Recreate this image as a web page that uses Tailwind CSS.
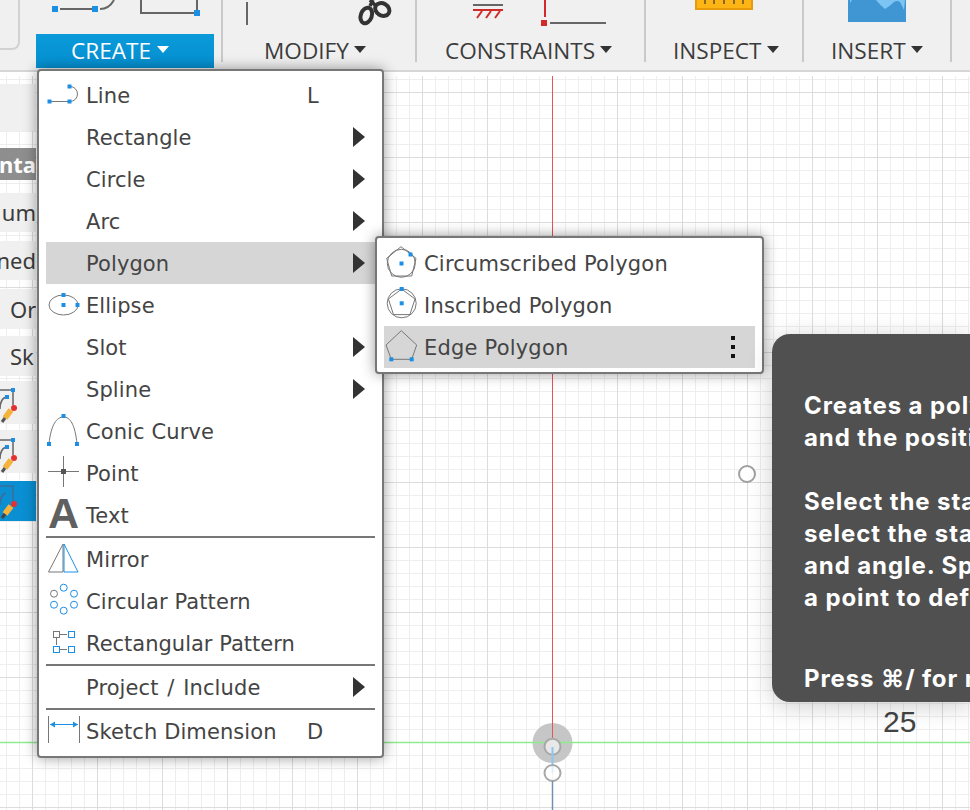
<!DOCTYPE html>
<html lang="en">

<head>
    <meta charset="UTF-8">
    <meta name="viewport" content="width=device-width, initial-scale=1.0">
    <title>Sketch Create Menu</title>
    <script src="https://cdn.jsdelivr.net/npm/@tailwindcss/browser@4"></script>
</head>

<body class="w-[970px] h-[810px] overflow-hidden bg-white">
    <div class="flex flex-col w-full h-full">
        <!-- toolbar -->
        <header class="relative flex h-[72px] shrink-0 bg-[#f0f0f0] border-b-2 border-[#d6d6d6] font-['Open_Sans',sans-serif] text-[#3c3c3c] text-[22.6px] leading-none">
            <div class="w-[20px] h-[50px] shrink-0 border-r-2 border-b-2 border-[#d2d2d2] rounded-br-lg"></div>
            <div class="w-[16px] shrink-0"></div>
            <!-- create -->
            <div class="w-[178px] h-[70px] shrink-0 flex flex-col">
                <svg width="178" height="34" class="shrink-0">
                    <path d="M24 9H56M64 9Q73 9 78 0" fill="none" stroke="#666" stroke-width="2" />
                    <rect x="16" y="6" width="6" height="6" fill="#1b8fe6" />
                    <rect x="56" y="6" width="6" height="6" fill="#1b8fe6" />
                    <path d="M105 0V13H161V0" fill="none" stroke="#666" stroke-width="2" />
                    <rect x="158" y="10" width="6" height="6" fill="#1b8fe6" />
                </svg>
                <div class="h-[34px] pl-[35px] bg-gradient-to-b from-[#0a9ada] to-[#058fd0] text-white flex items-center gap-[6px]">
                    <span>CREATE</span><span class="w-0 h-0 border-x-[6px] border-x-transparent border-t-[7px] border-t-white mb-[3px]"></span>
                </div>
            </div>
            <div class="w-[7px] shrink-0"></div>
            <!-- modify -->
            <div class="w-[2px] h-[62px] shrink-0 bg-[#c9c9c9]"></div>
            <div class="w-[192px] h-[70px] shrink-0 flex flex-col">
                <svg width="192" height="34" class="shrink-0">
                    <path d="M24 2V25" stroke="#666" stroke-width="2" />
                    <ellipse cx="143.3" cy="15.5" rx="5.5" ry="8" fill="none" stroke="#333" stroke-width="4" transform="rotate(20 143.3 15.5)" />
                    <ellipse cx="159.3" cy="9.5" rx="7.5" ry="6" fill="none" stroke="#333" stroke-width="4" transform="rotate(30 159.3 9.5)" />
                    <path d="M147 6L150 0M153 6L147 0" stroke="#333" stroke-width="3.5" />
                </svg>
                <div class="h-[34px] pl-[41px] flex items-center gap-[5px]">
                    <span>MODIFY</span><span class="w-0 h-0 border-x-[6px] border-x-transparent border-t-[7px] border-t-[#333] mb-[3px]"></span>
                </div>
            </div>
            <!-- constraints -->
            <div class="w-[2px] h-[62px] shrink-0 bg-[#c9c9c9]"></div>
            <div class="w-[227px] h-[70px] shrink-0 flex flex-col">
                <svg width="227" height="34" class="shrink-0">
                    <path d="M56 5H86" stroke="#666" stroke-width="2" />
                    <path d="M56 10H86" stroke="#d02a2a" stroke-width="2" />
                    <path d="M60 18L65 11M69 18L74 11M78 18L83 11" stroke="#d02a2a" stroke-width="2" />
                    <path d="M128 0V17" stroke="#d02a2a" stroke-width="2" />
                    <rect x="124" y="20" width="6" height="6" fill="#d02a2a" />
                    <path d="M133 23H189" stroke="#666" stroke-width="2" />
                </svg>
                <div class="h-[34px] pl-[28px] flex items-center gap-[5px]">
                    <span>CONSTRAINTS</span><span class="w-0 h-0 border-x-[6px] border-x-transparent border-t-[7px] border-t-[#333] mb-[3px]"></span>
                </div>
            </div>
            <!-- inspect -->
            <div class="w-[2px] h-[62px] shrink-0 bg-[#c9c9c9]"></div>
            <div class="w-[156px] h-[70px] shrink-0 flex flex-col">
                <svg width="156" height="34" class="shrink-0">
                    <rect x="50" y="-2" width="56" height="12" fill="#fdb515" />
                    <path d="M50 9H106V0" fill="none" stroke="#e89b0a" stroke-width="2" />
                    <path d="M50 0V10" stroke="#e89b0a" stroke-width="2" />
                    <path d="M59 0V4M68 0V4M78 0V4M88 0V4M97 0V4" stroke="#8a6a20" stroke-width="2" />
                </svg>
                <div class="h-[34px] pl-[27px] flex items-center gap-[5px]">
                    <span>INSPECT</span><span class="w-0 h-0 border-x-[6px] border-x-transparent border-t-[7px] border-t-[#333] mb-[3px]"></span>
                </div>
            </div>
            <!-- insert -->
            <div class="w-[2px] h-[62px] shrink-0 bg-[#c9c9c9]"></div>
            <div class="w-[146px] h-[70px] shrink-0 flex flex-col">
                <svg width="146" height="34" class="shrink-0">
                    <rect x="44" y="0" width="58" height="22" fill="#4096d2" />
                    <path d="M46 0H48L46 3ZM72 0Q76 5 81 9Q86 6 90 2Q93 0 96 2Q98 6 100 10L101 0Z" fill="#7cc4f4" />
                </svg>
                <div class="h-[34px] pl-[27px] flex items-center gap-[5px]">
                    <span>INSERT</span><span class="w-0 h-0 border-x-[6px] border-x-transparent border-t-[7px] border-t-[#333] mb-[3px]"></span>
                </div>
            </div>
            <div class="w-[2px] h-[62px] shrink-0 bg-[#c9c9c9]"></div>
        </header>

        <!-- sketch canvas -->
        <main class="relative flex-1 bg-white bg-[image:linear-gradient(to_right,#dcdcdc_1px,transparent_1px),linear-gradient(to_bottom,#dcdcdc_1px,transparent_1px),linear-gradient(to_right,#eeeeee_1px,transparent_1px),linear-gradient(to_bottom,#eeeeee_1px,transparent_1px)] bg-[size:65px_65px,65px_65px,13px_13px,13px_13px] bg-[position:32px_0,0_20px,6px_0,0_7px]">
            <div class="absolute left-0 right-0 top-0 h-[4px] bg-white"></div>
            <!-- axes -->
            <svg class="absolute inset-0" width="970" height="738">
                <circle cx="552.5" cy="671" r="20" fill="#c6c6c6" />
                <path d="M0 670.5H970" stroke="#8eea8e" stroke-width="1.5" />
                <path d="M552.5 4V670" stroke="#e8525a" stroke-width="1" />
                <circle cx="552.5" cy="674.7" r="8" fill="#e8e8e8" stroke="#a8a8a8" stroke-width="2" />
                <path d="M552.5 675V701" stroke="#8cc8ee" stroke-width="2" />
                <circle cx="552.5" cy="701" r="8" fill="#fff" fill-opacity="0.7" stroke="#a8a8a8" stroke-width="2" />
                <path d="M552.5 709V738" stroke="#7090b4" stroke-width="1.5" />
                <circle cx="747" cy="402" r="8" fill="#fff" stroke="#a0a0a0" stroke-width="2" />
            </svg>
            <div class="absolute left-[883px] top-[632px] font-['Liberation_Sans',sans-serif] text-[30px] leading-[36px] text-[#444]">25</div>

            <!-- browser panel -->
            <div class="absolute left-0 top-[12px] w-[36px] flex flex-col overflow-hidden font-['Noto_Sans',sans-serif] text-[22px] text-[#3c3c3c] whitespace-nowrap">
                <div class="h-[47px] bg-[#f0f0f0]"></div>
                <div class="h-[32px] mt-[17px] bg-[#8e8e8e] text-white font-bold flex items-center justify-end leading-none">nta</div>
                <div class="h-[39px] mt-[13px] bg-[#f0f0f0] flex items-center justify-end">um</div>
                <div class="h-[39px] mt-[9px] bg-[#f0f0f0] flex items-center justify-end">ned</div>
                <div class="h-[40px] mt-[9px] bg-[#f0f0f0] pl-[10px] flex items-center">Or</div>
                <div class="h-[40px] mt-[7px] bg-[#f0f0f0] pl-[10px] flex items-center">Sk</div>
                <div class="h-[43px] mt-[5px] bg-[#f0f0f0]">
                    <svg width="36" height="43">
                        <path d="M0 9H13V24M0 28Q0 18 6 16" fill="none" stroke="#666" stroke-width="1.5" />
                        <rect x="11" y="7" width="4" height="4" fill="#1b8fe6" /><rect x="5" y="14" width="4" height="4" fill="#1b8fe6" />
                        <path d="M5 37L11 29" stroke="#f5b33c" stroke-width="6" /><path d="M5 37L2 41" stroke="#555" stroke-width="3" /><circle cx="14" cy="27" r="3" fill="#e43030" />
                    </svg>
                </div>
                <div class="h-[42px] mt-[7px] bg-[#f0f0f0]">
                    <svg width="36" height="42">
                        <path d="M0 9H13V24M0 28Q0 18 6 16" fill="none" stroke="#666" stroke-width="1.5" />
                        <rect x="11" y="7" width="4" height="4" fill="#1b8fe6" /><rect x="5" y="14" width="4" height="4" fill="#1b8fe6" />
                        <path d="M5 37L11 29" stroke="#f5b33c" stroke-width="6" /><path d="M5 37L2 41" stroke="#555" stroke-width="3" /><circle cx="14" cy="27" r="3" fill="#e43030" />
                    </svg>
                </div>
                <div class="h-[40px] mt-[8px] bg-[#0a8fd2]">
                    <svg width="36" height="40">
                        <path d="M0 5H13V20M0 24Q0 14 6 12" fill="none" stroke="#3b6f96" stroke-width="1.5" />
                        <path d="M5 33L11 25" stroke="#f5b33c" stroke-width="6" /><path d="M5 33L2 37" stroke="#444" stroke-width="3" /><circle cx="14" cy="23" r="3" fill="#e43030" />
                    </svg>
                </div>
            </div>

            <!-- create menu -->
            <div class="absolute left-[37px] top-[-3px] w-[347px] h-[689px] bg-white border-2 border-[#777] rounded-[4px] shadow-[0_0_14px_rgba(0,0,0,0.4)] px-[7px] pt-[3px] font-['DejaVu_Sans',sans-serif] text-[21px] tracking-[0.1px] text-[#444] flex flex-col">
                <div class="h-[42px] flex items-center">
                    <svg width="40" height="42" class="shrink-0">
                        <path d="M5 27.5H22M24 12.5A7.5 7.5 0 0 1 24 27.5" fill="none" stroke="#777" />
                        <rect x="1.5" y="25.5" width="4" height="4" fill="#1b8fe6" /><rect x="21.5" y="25.5" width="4" height="4" fill="#1b8fe6" /><rect x="21.5" y="10.5" width="4" height="4" fill="#1b8fe6" />
                    </svg>
                    <span class="flex-1 pt-[4px]">Line</span><span class="w-[68px] pt-[4px]">L</span>
                </div>
                <div class="h-[42px] flex items-center"><span class="w-[40px] shrink-0"></span><span class="flex-1 pt-[4px]">Rectangle</span><span class="w-0 h-0 border-y-[10px] border-y-transparent border-l-[12px] border-l-[#333] mr-[10px]"></span></div>
                <div class="h-[42px] flex items-center"><span class="w-[40px] shrink-0"></span><span class="flex-1 pt-[4px]">Circle</span><span class="w-0 h-0 border-y-[10px] border-y-transparent border-l-[12px] border-l-[#333] mr-[10px]"></span></div>
                <div class="h-[42px] flex items-center"><span class="w-[40px] shrink-0"></span><span class="flex-1 pt-[4px]">Arc</span><span class="w-0 h-0 border-y-[10px] border-y-transparent border-l-[12px] border-l-[#333] mr-[10px]"></span></div>
                <div class="h-[42px] flex items-center bg-[#d6d6d6]"><span class="w-[40px] shrink-0"></span><span class="flex-1 pt-[4px]">Polygon</span><span class="w-0 h-0 border-y-[10px] border-y-transparent border-l-[12px] border-l-[#333] mr-[10px]"></span></div>
                <div class="h-[42px] flex items-center">
                    <svg width="40" height="42" class="shrink-0">
                        <ellipse cx="17.5" cy="21" rx="14.5" ry="10" fill="none" stroke="#777" />
                        <rect x="15.5" y="9" width="4" height="4" fill="#1b8fe6" /><rect x="15.5" y="19" width="4" height="4" fill="#1b8fe6" /><rect x="29.5" y="19" width="4" height="4" fill="#1b8fe6" />
                    </svg>
                    <span class="pt-[4px]">Ellipse</span>
                </div>
                <div class="h-[42px] flex items-center"><span class="w-[40px] shrink-0"></span><span class="flex-1 pt-[4px]">Slot</span><span class="w-0 h-0 border-y-[10px] border-y-transparent border-l-[12px] border-l-[#333] mr-[10px]"></span></div>
                <div class="h-[42px] flex items-center"><span class="w-[40px] shrink-0"></span><span class="flex-1 pt-[4px]">Spline</span><span class="w-0 h-0 border-y-[10px] border-y-transparent border-l-[12px] border-l-[#333] mr-[10px]"></span></div>
                <div class="h-[42px] flex items-center">
                    <svg width="40" height="42" class="shrink-0">
                        <path d="M3 34C5 14 11 7 17.5 7C24 7 29 14 31 34" fill="none" stroke="#777" />
                        <rect x="1" y="32" width="4" height="4" fill="#1b8fe6" /><rect x="15.5" y="4" width="4" height="4" fill="#1b8fe6" /><rect x="29" y="32" width="4" height="4" fill="#1b8fe6" />
                    </svg>
                    <span class="pt-[4px]">Conic Curve</span>
                </div>
                <div class="h-[42px] flex items-center">
                    <svg width="40" height="42" class="shrink-0">
                        <path d="M2 19.5H33M17.5 4V35" stroke="#777" />
                        <rect x="15" y="17" width="5" height="5" fill="#555" />
                    </svg>
                    <span class="pt-[4px]">Point</span>
                </div>
                <div class="h-[42px] flex items-center">
                    <span class="w-[40px] shrink-0 pl-[2px] pb-[4px] font-['Liberation_Sans',sans-serif] font-bold text-[43px] leading-[38px] tracking-normal text-[#606060]">A</span>
                    <span class="pt-[4px]">Text</span>
                </div>
                <div class="h-[2px] bg-[#777] shrink-0"></div>
                <div class="h-[42px] flex items-center">
                    <svg width="40" height="42" class="shrink-0">
                        <path d="M2.5 34L17 6V34Z" fill="none" stroke="#777" />
                        <path d="M18 6L32 34H18Z" fill="none" stroke="#1b8fe6" />
                    </svg>
                    <span class="pt-[4px]">Mirror</span>
                </div>
                <div class="h-[42px] flex items-center">
                    <svg width="40" height="42" class="shrink-0" fill="none" stroke="#1b8fe6">
                        <circle cx="8" cy="13.7" r="3.5" stroke="#777" /><circle cx="17.7" cy="7.7" r="3.5" /><circle cx="28" cy="13.7" r="3.5" /><circle cx="28" cy="24.7" r="3.5" /><circle cx="17.7" cy="30.7" r="3.5" /><circle cx="8" cy="24.7" r="3.5" />
                    </svg>
                    <span class="pt-[4px]">Circular Pattern</span>
                </div>
                <div class="h-[42px] flex items-center">
                    <svg width="40" height="42" class="shrink-0" fill="none" stroke="#1b8fe6">
                        <path d="M14 12.5H21M14 27.5H21M10.5 16V23" stroke="#777" />
                        <rect x="7.5" y="9.5" width="6" height="6" stroke="#777" /><rect x="22.5" y="9.5" width="6" height="6" /><rect x="7.5" y="24.5" width="6" height="6" /><rect x="22.5" y="24.5" width="6" height="6" />
                    </svg>
                    <span class="pt-[4px] tracking-normal">Rectangular Pattern</span>
                </div>
                <div class="h-[2px] bg-[#777] shrink-0"></div>
                <div class="h-[42px] flex items-center"><span class="w-[40px] shrink-0"></span><span class="flex-1 pt-[4px] [word-spacing:2px]">Project / Include</span><span class="w-0 h-0 border-y-[10px] border-y-transparent border-l-[12px] border-l-[#333] mr-[10px]"></span></div>
                <div class="h-[2px] bg-[#777] shrink-0"></div>
                <div class="h-[42px] flex items-center">
                    <svg width="40" height="42" class="shrink-0">
                        <path d="M2.5 6V33M33.5 6V33" stroke="#777" />
                        <path d="M4 14.5H32" stroke="#1b8fe6" />
                        <path d="M4 14.5L9 11.5V17.5ZM32 14.5L27 11.5V17.5Z" fill="#1b8fe6" />
                    </svg>
                    <span class="flex-1 pt-[4px]">Sketch Dimension</span><span class="w-[68px] pt-[4px]">D</span>
                </div>
            </div>

            <!-- polygon submenu -->
            <div class="absolute left-[375px] top-[164px] w-[389px] h-[138px] bg-white border-2 border-[#777] rounded-[4px] shadow-[0_0_14px_rgba(0,0,0,0.4)] px-[7px] pt-[4px] font-['DejaVu_Sans',sans-serif] text-[21px] tracking-[0.2px] text-[#444] flex flex-col">
                <div class="h-[42px] flex items-center">
                    <svg width="40" height="42" class="shrink-0" fill="none" stroke="#777">
                        <path d="M17 4.7L32 16.3L27.7 34H7.7L2.7 16.3Z" /><circle cx="17.3" cy="21.3" r="14" />
                        <rect x="15.5" y="19.5" width="4" height="4" fill="#1b8fe6" stroke="none" /><rect x="24.5" y="10.5" width="4" height="4" fill="#1b8fe6" stroke="none" />
                    </svg>
                    <span class="pt-[4px]">Circumscribed Polygon</span>
                </div>
                <div class="h-[42px] flex items-center">
                    <svg width="40" height="42" class="shrink-0" fill="none" stroke="#777">
                        <path d="M17.7 5L31 15L25.9 30.6H9.5L4.4 15Z" /><circle cx="17.7" cy="19.3" r="14.5" />
                        <rect x="15.7" y="3" width="4" height="4" fill="#1b8fe6" stroke="none" /><rect x="15.7" y="17.3" width="4" height="4" fill="#1b8fe6" stroke="none" />
                    </svg>
                    <span class="pt-[4px]">Inscribed Polygon</span>
                </div>
                <div class="h-[42px] flex items-center bg-[#d6d6d6]">
                    <svg width="40" height="42" class="shrink-0" fill="none" stroke="#777">
                        <path d="M17.3 4.7L32.7 19L27.7 33.3H7.3L2 19Z" />
                        <rect x="5.3" y="31.3" width="4" height="4" fill="#1b8fe6" stroke="none" /><rect x="25.7" y="31.3" width="4" height="4" fill="#1b8fe6" stroke="none" />
                    </svg>
                    <span class="flex-1 pt-[4px]">Edge Polygon</span>
                    <span class="flex flex-col gap-[5px] mr-[20px]"><i class="w-[4px] h-[4px] bg-[#111]"></i><i class="w-[4px] h-[4px] bg-[#111]"></i><i class="w-[4px] h-[4px] bg-[#111]"></i></span>
                </div>
            </div>

            <!-- tooltip, runs off the right edge of the window -->
            <div class="absolute left-[772px] top-[262px] w-[198px] h-[368px] overflow-hidden bg-[#505050] rounded-l-[18px] shadow-[0_4px_24px_rgba(0,0,0,0.2)] pl-[32px] pt-[56px] font-['Inter',sans-serif] font-bold text-[24px] tracking-[0.9px] leading-[32px] text-white whitespace-nowrap">
                <p>Creates a polygon</p>
                <p>and the position</p>
                <p class="mt-[32px]">Select the start</p>
                <p>select the start</p>
                <p>and angle. Specify</p>
                <p>a point to define</p>
                <p class="mt-[49px]">Press ⌘/ for more</p>
            </div>
        </main>
    </div>
</body>

</html>
